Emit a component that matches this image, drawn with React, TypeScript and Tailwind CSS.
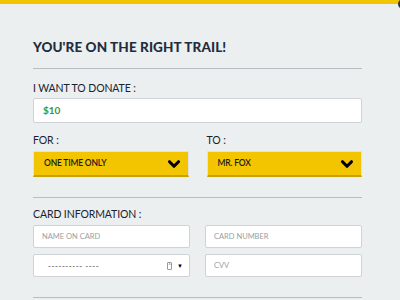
import { ChevronDown } from 'lucide-react'

const font = { fontFamily: 'Lato, "Open Sans", sans-serif' }

function Label({ children }: { children: string }) {
    return (
        <div className="text-[10.5px] leading-[12px] text-[#18232e] tracking-[-0.1px]">{children}</div>
    )
}

function Field({ placeholder }: { placeholder: string }) {
    return (
        <div className="flex h-[23px] items-center rounded-[2px] border border-[#cfd3d6] bg-white px-[8px] text-[7.5px] text-[#9a9ea2]">
            {placeholder}
        </div>
    )
}

function Select({ value }: { value: string }) {
    return (
        <div className="flex h-[26px] items-center justify-between border border-[#e0e3e5] border-b-2 border-b-[#c9a100] bg-[#f2c500] pl-[10px] pr-[5px]">
            <span className="text-[8.5px] font-semibold text-[#1b1b1b] tracking-[-0.2px]">{value}</span>
            <ChevronDown className="h-[18px] w-[18px] text-black" strokeWidth={4.2} />
        </div>
    )
}

export default function App() {
    return (
        <div style={font} className="relative h-[300px] w-[400px] overflow-hidden bg-[#eceff0]">
            <div className="h-[4px] bg-[#f2c500]" />
            <div className="absolute right-[-8px] top-[-1px] h-[10px] w-[10px] rounded-full border-2 border-[#333]" />

            <div className="pl-[33px] pr-[38px]">
                <h1 className="mt-[35px] text-[13.5px] font-black leading-[16px] tracking-[0.1px] text-[#1f2d3d]">YOU'RE ON THE RIGHT TRAIL!</h1>
                <div className="mt-[13px] h-px bg-[#b9bdc0]" />

                <div className="mt-[13px]">
                    <Label>I WANT TO DONATE :</Label>
                </div>
                <div className="mt-[4px] flex h-[25px] items-center rounded-[2px] border border-[#cfd3d6] bg-white px-[9px] text-[10px] font-bold text-[#2d9b3a]">
                    $10
                </div>

                <div className="mt-[11px] grid grid-cols-2 gap-x-[18px]">
                    <div>
                        <Label>FOR :</Label>
                        <div className="mt-[5px]">
                            <Select value="ONE TIME ONLY" />
                        </div>
                    </div>
                    <div>
                        <Label>TO :</Label>
                        <div className="mt-[5px]">
                            <Select value="MR. FOX" />
                        </div>
                    </div>
                </div>

                <div className="mt-[20px] h-px bg-[#b9bdc0]" />

                <div className="mt-[10px]">
                    <Label>CARD INFORMATION :</Label>
                </div>
                <div className="mt-[5px] grid grid-cols-2 gap-x-[15px] gap-y-[6px]">
                    <Field placeholder="NAME ON CARD" />
                    <Field placeholder="CARD NUMBER" />
                    <div className="flex h-[23px] items-center rounded-[2px] border border-[#cfd3d6] bg-white pl-[14px] pr-[6px] text-[8px] text-[#333]">
                        <span className="flex-1 tracking-[0.5px]">---------- ----</span>
                        <span className="mr-[5px] flex h-[8px] w-[5px] flex-col items-center justify-center rounded-[1px] border border-[#999] text-[5px] leading-[3px] text-[#555]">
                            <span>˄</span>
                        </span>
                        <span className="text-[6px] text-black">▼</span>
                    </div>
                    <Field placeholder="CVV" />
                </div>

                <div className="mt-[20px] h-px bg-[#b9bdc0]" />
            </div>
        </div>
    )
}
